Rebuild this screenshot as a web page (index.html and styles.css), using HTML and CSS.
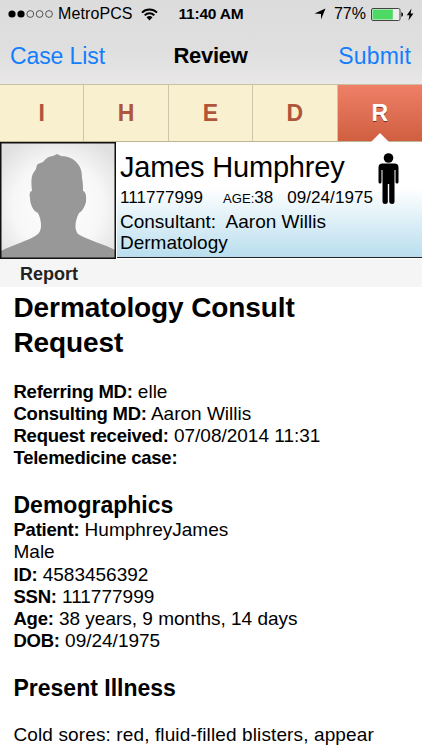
FILE: index.html
```html
<!DOCTYPE html>
<html lang="en">
<head>
    <meta charset="UTF-8">
    <meta name="viewport" content="width=device-width, initial-scale=1.0">
    <title>Review</title>
    <link rel="stylesheet" href="styles.css">
</head>
<body>

<header class="top-bar">
    <!-- Phone status -->
    <div class="status-bar">
        <div class="status-left">
            <svg class="signal" width="46" height="10" viewBox="0 0 46 10">
                <circle cx="4" cy="5" r="3.6"/>
                <circle cx="13" cy="5" r="3.6"/>
                <circle class="empty" cx="22.3" cy="5" r="3.4"/>
                <circle class="empty" cx="31.6" cy="5" r="3.4"/>
                <circle class="empty" cx="41" cy="5" r="3.4"/>
            </svg>
            <span class="carrier">MetroPCS</span>
            <svg class="wifi" width="17" height="13" viewBox="0 0 17 13">
                <path d="M1 4.6C5 .4 12 .4 16 4.6M3.7 7.4c2.7-2.8 6.9-2.8 9.6 0"/>
                <path class="wifi-dot" d="M5.5 9.2c1.7-1.7 4.3-1.7 6 0l-3 3.2z"/>
            </svg>
        </div>
        <span class="clock">11:40 AM</span>
        <div class="status-right">
            <svg class="location" width="12" height="12" viewBox="0 0 12 12">
                <path d="M11.5.5L7 11.5V6.1L.5 5.5z"/>
            </svg>
            <span class="percent">77%</span>
            <svg class="battery" width="33" height="13" viewBox="0 0 33 13">
                <rect class="battery-case" x=".5" y=".5" width="28.5" height="12" rx="1.5"/>
                <rect class="battery-level" x="1.5" y="1.5" width="20.3" height="10"/>
                <path d="M30.3 4.2c2.3.3 2.3 4.3 0 4.6z"/>
            </svg>
            <svg class="bolt" width="8" height="13" viewBox="0 0 8 13">
                <path d="M5.5.5L.8 7.2h2.6L2.5 12.5 7.4 5.6H4.6z"/>
            </svg>
        </div>
    </div>

    <nav class="nav-bar">
        <a class="nav-link">Case List</a>
        <h1 class="nav-title">Review</h1>
        <a class="nav-link submit">Submit</a>
    </nav>
</header>

<!-- Section tabs -->
<div class="tabs">
    <div class="tab">I</div>
    <div class="tab">H</div>
    <div class="tab">E</div>
    <div class="tab">D</div>
    <div class="tab active">R</div>
</div>

<!-- Patient summary -->
<section class="patient">
    <svg class="avatar" width="116" height="117" viewBox="0 0 116 117">
        <defs>
            <radialGradient id="avatarBg" cx="50%" cy="55%" r="65%">
                <stop offset="0" stop-color="#ffffff"/>
                <stop offset=".6" stop-color="#f7f7f7"/>
                <stop offset="1" stop-color="#e0e0e0"/>
            </radialGradient>
        </defs>
        <rect x="1" y="1" width="114" height="115" fill="url(#avatarBg)"/>
        <path class="person" d="M1 109C14 102 29 99 38 92C43 87 41 77 38 71C33 69 30 62 30 56C29 52 30 49 32 49C31 40 31 34 34 30C37 27 36 23 38 22L43 20C46 16 49 14 53 14L57 12L61 14C68 14 74 17 77 21C81 25 82 30 82 36C83 40 83 45 83 49C87 50 86 57 86 60C84 67 81 70 79 71C75 79 74 87 78 92C89 99 105 102 115 108V116H1Z"/>
        <rect class="frame" x=".75" y=".75" width="114.5" height="115.5"/>
    </svg>
    <div class="patient-info">
        <div class="patient-name">James Humphrey</div>
        <div class="patient-ids">
            <span class="patient-ssn">111777999</span>
            <span class="patient-age"><small>AGE:</small>38</span>
            <span>09/24/1975</span>
        </div>
        <div class="patient-line">Consultant:&nbsp; Aaron Willis</div>
        <div class="patient-line">Dermatology</div>
        <svg class="gender" width="21" height="52" viewBox="0 0 21 52">
            <circle cx="10.5" cy="5" r="4.8"/>
            <path d="M4.500 10.500h12q4 0 4 4V29q0 1.500-1.500 1.500T17.500 29V17h-1v32q0 2-2.400 2T11.200 49V31h-1.400V49q0 2-2.600 2T4.500 49V17h-1V29q0 1.500-1.500 1.500T.5 29V14.500q0-4 4-4z"/>
        </svg>
    </div>
</section>

<div class="section-title">Report</div>

<!-- Report text -->
<main class="report">
    <h2>Dermatology Consult Request</h2>

    <p><b>Referring MD:</b> elle</p>
    <p><b>Consulting MD:</b> Aaron Willis</p>
    <p><b>Request received:</b> 07/08/2014 11:31</p>
    <p><b>Telemedicine case:</b></p>

    <h3>Demographics</h3>
    <p><b>Patient:</b> HumphreyJames</p>
    <p>Male</p>
    <p><b>ID:</b> 4583456392</p>
    <p><b>SSN:</b> 111777999</p>
    <p><b>Age:</b> 38 years, 9 months, 14 days</p>
    <p><b>DOB:</b> 09/24/1975</p>

    <h3>Present Illness</h3>
    <p class="illness">Cold sores: red, fluid-filled blisters, appear</p>
</main>

</body>
</html>
```
FILE: styles.css
```css
* {
    box-sizing: border-box;
}

body {
    margin: 0;
    height: 750px;
    overflow: hidden;
    background: #fff;
    color: #000;
    font-family: "Liberation Sans", Arial, sans-serif;
}

svg {
    display: block;
    flex: none;
}

/* Status and navigation */
.top-bar {
    height: 84px;
    background: linear-gradient(#dcdcdc, #dfdfdf 60%, #e9e7e7);
}

.status-bar {
    display: grid;
    grid-template-columns: 1fr auto 1fr;
    align-items: center;
    height: 28px;
    padding: 0 8px;
    font-size: 16px;
}

.status-left, .status-right {
    display: flex;
    align-items: center;
}

.status-right {
    justify-content: flex-end;
}

.signal .empty {
    fill: none;
    stroke: #333;
    stroke-width: 0.8;
}

.carrier {
    margin-left: 4px;
    letter-spacing: 0.1px;
}

.wifi {
    margin-left: 8px;
    fill: none;
    stroke: #000;
    stroke-width: 2;
}

.wifi .wifi-dot {
    fill: #000;
    stroke: none;
}

.clock {
    font-size: 15.5px;
    font-weight: bold;
    letter-spacing: -0.2px;
}

.percent {
    margin: 0 5px 0 8px;
}

.battery-case {
    fill: #eee;
    stroke: #444;
}

.battery-level {
    fill: #4cd964;
}

.bolt {
    margin-left: 2px;
}

.nav-bar {
    display: grid;
    grid-template-columns: 1fr auto 1fr;
    align-items: center;
    height: 56px;
    padding: 0 11px 0 10px;
}

.nav-link {
    color: #147efb;
    font-size: 23px;
    letter-spacing: -0.1px;
}

.submit {
    text-align: right;
    letter-spacing: 0.2px;
}

.nav-title {
    margin: 0;
    font-size: 22px;
    letter-spacing: -0.3px;
}

/* Tabs */
.tabs {
    display: grid;
    grid-template-columns: repeat(5, 1fr);
    height: 58px;
    border-top: 1px solid #c9c0a0;
    border-bottom: 1px solid #bdb592;
}

.tab {
    display: flex;
    align-items: center;
    justify-content: center;
    background: #f9f0cf;
    border-right: 1px solid #cdc6a9;
    color: #b0553c;
    font-size: 23px;
    font-weight: bold;
}

.tab.active {
    position: relative;
    background: linear-gradient(#ee8068, #d05f40);
    border-right: 0;
    color: #fff;
    text-shadow: 0 1px 0 #7b3020;
}

/* Pointer under the selected tab */
.tab.active::after {
    content: "";
    position: absolute;
    bottom: -1px;
    left: 50%;
    margin-left: -9px;
    border: 9px solid transparent;
    border-top: 0;
    border-bottom-color: #fff;
}

/* Patient summary */
.patient {
    display: flex;
    height: 117px;
}

.avatar .person {
    fill: #989898;
}

.avatar .frame {
    fill: none;
    stroke: #111;
    stroke-width: 1.5;
}

.patient-info {
    position: relative;
    flex: 1;
    height: 116px;
    margin-left: 1px;
    padding: 8px 0 0 3px;
    background: linear-gradient(#fff 40%, #b9deee);
    border-bottom: 1px solid #222;
    white-space: nowrap;
}

.patient-name {
    font-size: 29px;
    line-height: 34px;
    letter-spacing: -0.2px;
}

.patient-ids {
    display: flex;
    align-items: baseline;
    height: 27px;
    font-size: 17px;
    line-height: 28px;
    letter-spacing: 0.05px;
}

.patient-age {
    margin: 0 14px 0 20px;
}

.patient-age small {
    font-size: 13px;
}

.patient-line {
    font-size: 19px;
    line-height: 21px;
}

.gender {
    position: absolute;
    top: 11px;
    right: 23px;
}

/* Report */
.section-title {
    height: 28px;
    padding-left: 20px;
    background: #f5f5f5;
    color: #222;
    font-size: 18px;
    font-weight: bold;
    line-height: 30px;
}

.report {
    padding: 3px 13px 0 13.5px;
    font-size: 19px;
    line-height: 22.1px;
}

.report h2 {
    margin: 0 60px 21px 0;
    font-size: 28px;
    line-height: 35px;
    letter-spacing: -0.1px;
}

.report h3 {
    margin: 22px 0 0;
    font-size: 23px;
    line-height: 28px;
}

.report p {
    margin: 0;
    white-space: nowrap;
}

.report b {
    font-size: 18.5px;
    letter-spacing: -0.25px;
}

.report .illness {
    margin-top: 22px;
    letter-spacing: 0.12px;
}
```
